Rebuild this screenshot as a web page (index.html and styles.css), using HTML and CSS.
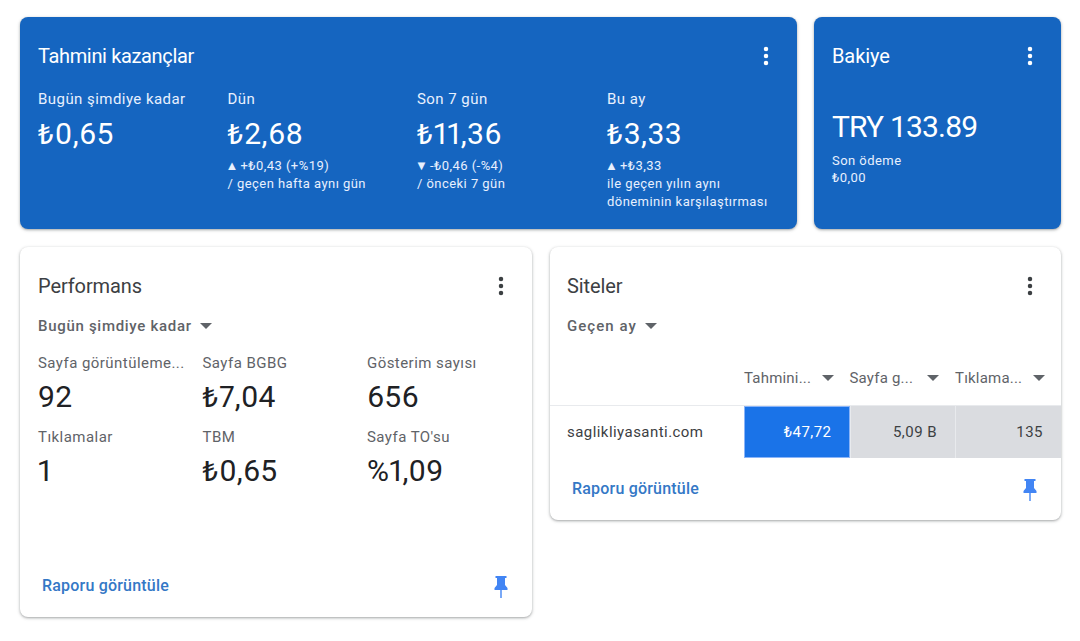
FILE: index.html
```html
<!DOCTYPE html>
<html lang="tr">
<head>
    <meta charset="UTF-8">
    <meta name="viewport" content="width=device-width, initial-scale=1.0">
    <title>Ana sayfa</title>
    <link rel="stylesheet" href="styles.css">
</head>
<body>
    <svg class="icon-defs" width="0" height="0">
        <symbol id="icon-more" viewBox="0 0 24 24">
            <circle cx="12" cy="5" r="2.25"></circle>
            <circle cx="12" cy="12" r="2.25"></circle>
            <circle cx="12" cy="19" r="2.25"></circle>
        </symbol>
        <symbol id="icon-pin" viewBox="0 0 24 24">
            <path d="M16 11V4h1.5V2h-11v2H8v7l-2.5 3v2h5.8v8h1.4v-8h5.8v-2z"></path>
        </symbol>
    </svg>

    <main class="page">
        <div class="row row-top">
            <section class="card card-blue earnings">
                <div class="card-header">
                    <h2 class="card-title">Tahmini kazançlar</h2>
                    <svg class="more-icon"><use href="#icon-more"></use></svg>
                </div>
                <div class="earnings-grid">
                    <div class="earning">
                        <div class="earning-label">Bugün şimdiye kadar</div>
                        <div class="earning-value"><span class="lira">₺</span>0,65</div>
                    </div>
                    <div class="earning">
                        <div class="earning-label">Dün</div>
                        <div class="earning-value"><span class="lira">₺</span>2,68</div>
                        <div class="earning-note"><span class="trend">▲</span> +₺0,43 (+%19)<br>/ geçen hafta aynı gün</div>
                    </div>
                    <div class="earning">
                        <div class="earning-label">Son 7 gün</div>
                        <div class="earning-value"><span class="lira">₺</span>11,36</div>
                        <div class="earning-note"><span class="trend">▼</span> -₺0,46 (-%4)<br>/ önceki 7 gün</div>
                    </div>
                    <div class="earning">
                        <div class="earning-label">Bu ay</div>
                        <div class="earning-value"><span class="lira">₺</span>3,33</div>
                        <div class="earning-note"><span class="trend">▲</span> +₺3,33<br>ile geçen yılın aynı<br>döneminin karşılaştırması</div>
                    </div>
                </div>
            </section>

            <section class="card card-blue balance">
                <div class="card-header">
                    <h2 class="card-title">Bakiye</h2>
                    <svg class="more-icon"><use href="#icon-more"></use></svg>
                </div>
                <div class="balance-value">TRY 133.89</div>
                <div class="balance-note">Son ödeme<br>₺0,00</div>
            </section>
        </div>

        <div class="row row-bottom">
            <section class="card performance">
                <div class="card-header">
                    <h2 class="card-title">Performans</h2>
                    <svg class="more-icon"><use href="#icon-more"></use></svg>
                </div>
                <div class="dropdown">Bugün şimdiye kadar <span class="caret"></span></div>
                <div class="metrics">
                    <div class="metric">
                        <div class="metric-label">Sayfa görüntüleme...</div>
                        <div class="metric-value">92</div>
                    </div>
                    <div class="metric">
                        <div class="metric-label">Sayfa BGBG</div>
                        <div class="metric-value"><span class="lira">₺</span>7,04</div>
                    </div>
                    <div class="metric">
                        <div class="metric-label">Gösterim sayısı</div>
                        <div class="metric-value">656</div>
                    </div>
                    <div class="metric">
                        <div class="metric-label">Tıklamalar</div>
                        <div class="metric-value">1</div>
                    </div>
                    <div class="metric">
                        <div class="metric-label">TBM</div>
                        <div class="metric-value"><span class="lira">₺</span>0,65</div>
                    </div>
                    <div class="metric">
                        <div class="metric-label">Sayfa TO'su</div>
                        <div class="metric-value">%1,09</div>
                    </div>
                </div>
                <div class="card-footer">
                    <a class="report-link">Raporu görüntüle</a>
                    <svg class="pin-icon"><use href="#icon-pin"></use></svg>
                </div>
            </section>

            <section class="card sites">
                <div class="card-header">
                    <h2 class="card-title">Siteler</h2>
                    <svg class="more-icon"><use href="#icon-more"></use></svg>
                </div>
                <div class="dropdown">Geçen ay <span class="caret"></span></div>
                <div class="table">
                    <div class="table-head">
                        <div class="head-spacer"></div>
                        <div class="head-cell"><span>Tahmini...</span><span class="caret"></span></div>
                        <div class="head-cell"><span>Sayfa g...</span><span class="caret"></span></div>
                        <div class="head-cell"><span>Tıklama...</span><span class="caret"></span></div>
                    </div>
                    <div class="table-row">
                        <div class="site-name">saglikliyasanti.com</div>
                        <div class="cell cell-active">₺47,72</div>
                        <div class="cell">5,09 B</div>
                        <div class="cell">135</div>
                    </div>
                </div>
                <div class="card-footer">
                    <a class="report-link">Raporu görüntüle</a>
                    <svg class="pin-icon"><use href="#icon-pin"></use></svg>
                </div>
            </section>
        </div>
    </main>
</body>
</html>
```

FILE: styles.css
```css
:root {
    --blue: #1565c0;
    --active: #1a73e8;
    --grey-cell: #dadce0;
    --text: #202124;
    --text-muted: #5f6368;
    --link: #3478c6;
    --pin: #4285f4;
    --border: #e8eaed;
}

* {
    margin: 0;
    padding: 0;
    box-sizing: border-box;
    font-family: Roboto, "Noto Sans", "Liberation Sans", sans-serif;
}

body {
    background-color: #ffffff;
    color: var(--text);
    height: 641px;
    overflow: hidden;
}

.icon-defs {
    display: block;
    height: 0;
}

.page {
    display: flex;
    flex-direction: column;
    gap: 18px;
    padding: 17px 19px 0 20px;
}

.row {
    display: grid;
    align-items: start;
}

.row-top {
    grid-template-columns: 777px 247px;
    gap: 17px;
}

.row-bottom {
    grid-template-columns: 512px 511px;
    gap: 18px;
}

.card {
    background: #ffffff;
    border-radius: 8px;
    box-shadow: 0 1px 2px rgba(60, 64, 67, 0.3), 0 1px 3px 1px rgba(60, 64, 67, 0.15);
}

.card-blue {
    background: var(--blue);
    color: #ffffff;
    height: 212px;
}

.card-header {
    display: flex;
    align-items: center;
    justify-content: space-between;
    height: 24px;
}

.card-title {
    font-size: 20px;
    font-weight: 400;
    line-height: 24px;
    letter-spacing: -0.1px;
    color: #3c4043;
}

.card-blue .card-title {
    color: #ffffff;
}

.earnings .card-title {
    letter-spacing: -0.35px;
}

.more-icon {
    width: 24px;
    height: 24px;
    fill: #3c4043;
    flex-shrink: 0;
}

.card-blue .more-icon {
    fill: #ffffff;
}

.lira {
    font-family: "Noto Sans", sans-serif;
    font-size: 0.9em;
    font-weight: 500;
    margin-right: 1px;
}

.trend {
    margin-left: -2px;
    margin-right: -2px;
}

/* kazanclar */
.earnings {
    padding: 27px 19px 0 18px;
}

.earnings-grid {
    display: grid;
    grid-template-columns: 189.5px 189.5px 190px 1fr;
    margin-top: 21px;
}

.earning-label {
    font-size: 15px;
    line-height: 20px;
    letter-spacing: 0.45px;
    color: #e8f0fe;
}

.earning-value {
    font-size: 30px;
    line-height: 36px;
    letter-spacing: 0.4px;
    font-variant-numeric: proportional-nums;
    margin-top: 7px;
}

.earning-note {
    font-size: 13px;
    line-height: 18px;
    letter-spacing: 0.45px;
    margin-top: 5px;
    color: #e8f0fe;
}

/* bakiye */
.balance {
    padding: 27px 19px 0 18px;
}

.balance-value {
    font-size: 30px;
    line-height: 36px;
    letter-spacing: -0.8px;
    margin-top: 41px;
}

.balance-note {
    font-size: 13px;
    line-height: 17px;
    letter-spacing: 0.45px;
    margin-top: 7px;
    color: #e8f0fe;
}

/* performans */
.performance {
    height: 370px;
    padding: 27px 19px 0 18px;
    display: flex;
    flex-direction: column;
}

.sites {
    height: 273px;
    padding-top: 27px;
    display: flex;
    flex-direction: column;
}

.sites .card-header {
    padding: 0 19px 0 17px;
}

.dropdown {
    display: flex;
    align-items: center;
    gap: 8px;
    font-size: 15px;
    font-weight: 500;
    line-height: 20px;
    letter-spacing: 0.7px;
    color: var(--text-muted);
    margin-top: 18px;
}

.sites .dropdown {
    padding-left: 17px;
    letter-spacing: 1.05px;
}

.caret {
    display: inline-block;
    width: 0;
    height: 0;
    border-left: 6px solid transparent;
    border-right: 6px solid transparent;
    border-top: 6px solid var(--text-muted);
    flex-shrink: 0;
}

.metrics {
    display: grid;
    grid-template-columns: 164.5px 164.5px 1fr;
    row-gap: 12px;
    margin-top: 17px;
}

.metric-label {
    font-size: 15px;
    line-height: 20px;
    letter-spacing: 0.45px;
    color: var(--text-muted);
}

.metric-value {
    font-size: 30px;
    line-height: 36px;
    letter-spacing: 0.2px;
    font-variant-numeric: proportional-nums;
    margin-top: 6px;
    color: var(--text);
}

.card-footer {
    display: flex;
    align-items: center;
    justify-content: space-between;
    margin-top: auto;
    height: 24px;
}

.performance .card-footer {
    margin-bottom: 19px;
    padding-left: 4px;
}

.sites .card-footer {
    margin-bottom: 19px;
    padding: 0 19px 0 22px;
}

.report-link {
    font-size: 16px;
    font-weight: 500;
    line-height: 20px;
    letter-spacing: 0.2px;
    color: var(--link);
}

.pin-icon {
    width: 24px;
    height: 24px;
    fill: var(--pin);
}

/* tablo */
.table {
    margin-top: 24px;
}

.table-head,
.table-row {
    display: grid;
    grid-template-columns: 194px 105.5px 105.5px 1fr;
}

.table-head {
    height: 46px;
    border-bottom: 1px solid var(--border);
}

.head-cell {
    display: flex;
    align-items: center;
    justify-content: space-between;
    height: 36px;
    padding-right: 16px;
    font-size: 15px;
    letter-spacing: 0.2px;
    color: var(--text-muted);
}

.table-row {
    height: 52px;
}

.site-name {
    display: flex;
    align-items: center;
    padding-left: 17px;
    font-size: 15px;
    letter-spacing: 0.45px;
    color: #3c4043;
}

.cell {
    display: flex;
    align-items: center;
    justify-content: flex-end;
    padding-right: 18px;
    font-size: 15px;
    letter-spacing: 0.45px;
    background: var(--grey-cell);
    color: #3c4043;
    border-left: 1px solid #e8eaed;
}

.cell-active {
    background: var(--active);
    color: #ffffff;
    border: 1px solid #8ab4f8;
    padding-right: 17px;
}
```
